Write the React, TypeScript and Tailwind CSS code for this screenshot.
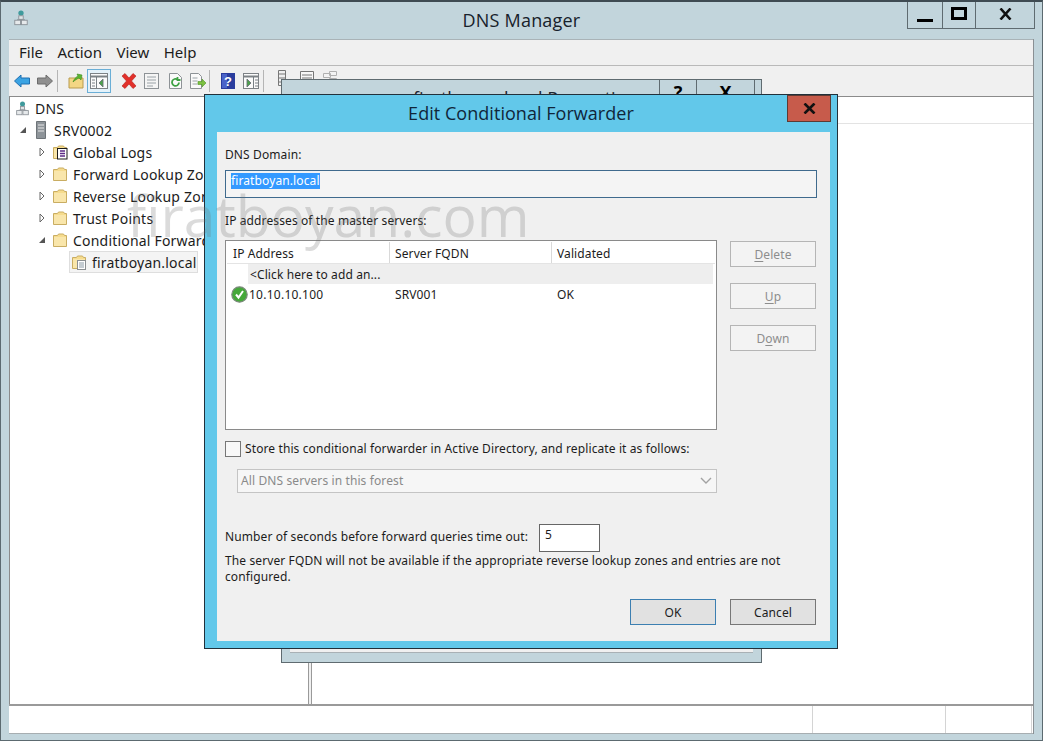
const ui = { fontFamily: '"Noto Sans", sans-serif' };

function DnsIcon({ size = 16 }: { size?: number }) {
  return (
    <svg width={size} height={size} viewBox="0 0 16 18" className="shrink-0">
      <circle cx="8" cy="3.5" r="3" fill="#3f9a9c" />
      <path d="M8 7v4M3.5 11h9" stroke="#8a9096" strokeWidth="1" fill="none" />
      <rect x="5.5" y="6.5" width="5" height="4" fill="#dfe3e6" stroke="#8a9096" strokeWidth="1" />
      <rect x="1" y="11.5" width="6.5" height="5" fill="#e6e9eb" stroke="#8a9096" strokeWidth="1" />
      <rect x="8.5" y="11.5" width="6.5" height="5" fill="#e6e9eb" stroke="#8a9096" strokeWidth="1" />
    </svg>
  );
}

function Folder({ doc = false, log = false }: { doc?: boolean; log?: boolean }) {
  return (
    <svg width="16" height="16" viewBox="0 0 16 16" className="shrink-0">
      <path d="M1.5 3.5h4l1-1.5h5l1 1.5h2v11h-13z" fill="#f6dc8e" stroke="#c9ad62" strokeWidth="1" />
      <rect x="2" y="5" width="12" height="9" fill="#f9e6ab" />
      {doc && (
        <>
          <rect x="6.5" y="6.5" width="8" height="9" fill="#fff" stroke="#8b8f92" />
          <path d="M8 9h5M8 11h5M8 13h5" stroke="#8b9aa5" />
        </>
      )}
      {log && (
        <>
          <rect x="5.5" y="4.5" width="9.5" height="10.5" fill="#fff" stroke="#1b1b1b" />
          <path d="M8 7h5M8 9.5h5M8 12h5" stroke="#5b2a86" strokeWidth="1.3" />
        </>
      )}
    </svg>
  );
}

function Caret({ open = false }: { open?: boolean }) {
  return (
    <svg width="8" height="10" viewBox="0 0 8 10" className="shrink-0">
      {open ? (
        <path d="M1 8h6V2z" fill="#555" />
      ) : (
        <path d="M2 1l4 4-4 4z" fill="#fff" stroke="#666" />
      )}
    </svg>
  );
}

function Row({ indent, caret, icon, label, selected }: { indent: string; caret?: "open" | "closed"; icon: React.ReactNode; label: string; selected?: boolean }) {
  return (
    <div className={`h-[22px] flex items-center ${indent}`}>
      {selected ? (
        <div className="flex items-center h-[22px] w-[129px] bg-[#f4f4f4] border border-[#dedede] pl-[1px] gap-[5px]">
          {icon}
          <span>{label}</span>
        </div>
      ) : (
        <>
          <div className="w-[14px] flex justify-start">{caret && <Caret open={caret === "open"} />}</div>
          <div className="flex items-center gap-[5px] whitespace-nowrap">
            {icon}
            <span>{label}</span>
          </div>
        </>
      )}
    </div>
  );
}

function Toolbar() {
  return (
    <div className="h-[30px] bg-[#f0f0f0] flex items-center pl-[5px] pb-[1px]">
      <svg width="16" height="14" viewBox="0 0 16 14"><path d="M0.5 7L7 1v3h8.500v6H7v3z" fill="#3aa3e3" stroke="#1f6fb0" /></svg>
      <svg width="16" height="14" viewBox="0 0 16 14" className="ml-[7px]"><path d="M15.500 7L9 1v3H0.500v6H9v3z" fill="#8f8f8f" stroke="#6c6c6c" /></svg>
      <div className="w-px h-[22px] bg-[#b5b5b5] ml-[4px]" />
      <svg width="16" height="16" viewBox="0 0 16 16" className="ml-[10px]"><path d="M1 5h14v10H1z" fill="#f3d684" stroke="#b99b4e" /><path d="M5 9c1-3 3-5 5-6l-1-2 5 1-1 5-2-2c-2 1-4 2-6 4z" fill="#5bb531" stroke="#3d8a1d" strokeWidth=".6" /></svg>
      <div className="ml-[3px] w-[24px] h-[24px] bg-[#e4f2fa] border border-[#6aaed6] flex items-center justify-center">
        <svg width="18" height="16" viewBox="0 0 18 16"><rect x=".5" y=".5" width="17" height="15" fill="#fbfbfb" stroke="#7d8286" /><path d="M1 3.500h16" stroke="#7d8286" strokeWidth="2" /><path d="M6.500 4v11M2 7h3M2 10h3M2 13h3M13 6v8l-4-4z" stroke="#6b7378" fill="#4ba34a" strokeWidth=".9" /></svg>
      </div>
      <svg width="18" height="16" viewBox="0 0 18 16" className="ml-[9px]"><path d="M2 3l3-2.500L9 5l4-4.500 3 2.500-4.500 5L16 13l-3 2.500L9 11l-4 4.500L2 13l4.500-5z" fill="#e2302a" stroke="#b3201b" strokeWidth=".6" /></svg>
      <svg width="15" height="16" viewBox="0 0 15 16" className="ml-[6px]"><rect x=".5" y=".5" width="14" height="15" fill="#f5f5f5" stroke="#8d9296" /><path d="M3 4h9M3 7h9M3 10h9M3 13h6" stroke="#9aa2a7" /></svg>
      <svg width="15" height="16" viewBox="0 0 15 16" className="ml-[9px]"><path d="M1.500.5h8l4 4v11h-12z" fill="#fafafa" stroke="#8d9296" /><path d="M11 9.500a3.500 3.500 0 1 1-1.500-3M9.500 4v3h3" stroke="#3da143" strokeWidth="1.800" fill="none" /></svg>
      <svg width="17" height="16" viewBox="0 0 17 16" className="ml-[6px]"><path d="M1.500.5h8l3 3v12h-11z" fill="#fafafa" stroke="#8d9296" /><path d="M3.500 5h5M3.500 8h5M3.500 11h5" stroke="#9aa2a7" /><path d="M9 8.500h4V6l4 4-4 4v-2.500H9z" fill="#7dc142" stroke="#4f9325" strokeWidth=".6" /></svg>
      <div className="w-px h-[22px] bg-[#b5b5b5] ml-[3px]" />
      <svg width="14" height="16" viewBox="0 0 14 16" className="ml-[11px]"><rect width="14" height="16" fill="#2a3d9e" /><rect x="1" y="1" width="5" height="14" fill="#4a63c9" /><text x="7" y="13" textAnchor="middle" fontSize="13" fontWeight="700" fontFamily="Liberation Sans" fill="#fff">?</text></svg>
      <svg width="16" height="16" viewBox="0 0 16 16" className="ml-[8px]"><rect x=".5" y=".5" width="15" height="15" fill="#fbfbfb" stroke="#7d8286" /><path d="M1 3.500h14" stroke="#7d8286" strokeWidth="2" /><path d="M10.500 4v11M12 7h3M12 10h3M12 13h3M4 6v8l4-4z" stroke="#6b7378" fill="#4ba34a" strokeWidth=".9" /></svg>
      <div className="w-px h-[22px] bg-[#b5b5b5] ml-[4px]" />
      <svg width="8" height="16" viewBox="0 0 8 16" className="ml-[14px] self-start mt-[4px]"><path d="M.5.500h7v15h-7zM1 4h6M1 8h6M1 12h6" fill="#f0f0f0" stroke="#777" /></svg>
      <svg width="14" height="16" viewBox="0 0 14 16" className="ml-[14px] self-start mt-[4px]"><path d="M.5 1.500h13v13H.5zM2 5h10M2 8h10M2 11h10" fill="#f7f7f7" stroke="#777" /></svg>
      <svg width="14" height="16" viewBox="0 0 14 16" className="ml-[9px] self-start mt-[4px]"><path d="M.5 3.500h7v4h-7zM6.500 1.500h7v4h-7zM6.500 8.500h7v4h-7z" fill="#f3f3f3" stroke="#b0b0b0" /></svg>
    </div>
  );
}

function SideButton({ children, mt }: { children: React.ReactNode; mt: string }) {
  return (
    <div className={`w-[86px] h-[26px] border border-[#b5b5b5] bg-[#f3f3f3] flex items-center justify-center pt-[1px] text-[#8d8d8d] ${mt}`}>
      <span>{children}</span>
    </div>
  );
}

function BackDialog() {
  return (
    <div className="absolute left-[280px] top-[77px] w-[481px] h-[584px] bg-[#c2d5dc] border border-[#5f6b70]">
      <div className="flex h-[26px]">
        <div className="flex-1 pl-[131px] text-[18px] text-[#1b2530] pt-[5px] whitespace-nowrap" style={{ fontFamily: '"Open Sans", sans-serif' }}>firatboyan.local Properties</div>
        <div className="w-[37px] h-[26px] border-l border-b border-[#5f6b70] flex items-center justify-center text-[18px] font-bold text-black">?</div>
        <div className="w-[59px] h-[26px] border-l border-r border-b border-[#5f6b70] flex items-center justify-center text-[18px] font-bold text-black">X</div>
        <div className="w-[6px]" />
      </div>
      <div className="mx-[8px] h-[547px] bg-[#f0f0f0] border-b border-[#a9b1b5]" />
    </div>
  );
}

function FrontDialog() {
  return (
    <div className="absolute left-[203px] top-[92px] w-[634px] h-[555px] bg-[#62c8ea] border border-[#22303a] text-[12px] tracking-[0.11px] text-[#1c1c1c] flex flex-col">
      <div className="h-[37px] flex relative shrink-0">
        <div className="flex-1 text-center text-[18px] tracking-[0.04px] text-[#10263a] pt-[4px] leading-[28px]" style={{ fontFamily: '"Open Sans", sans-serif' }}>Edit Conditional Forwarder</div>
        <div className="absolute right-[6px] top-0 w-[44px] h-[27px] bg-[#c75b4b] border border-[#5d3a33] flex items-center justify-center">
          <svg width="13" height="11" viewBox="0 0 13 11"><path d="M1.500 .5L11.500 10.500M11.500 .5L1.500 10.500" stroke="#111" strokeWidth="2.600" /></svg>
        </div>
      </div>
      <div className="mx-[12px] mt-0 mb-[7px] w-[613px] flex-1 bg-[#f0f0f0] pl-[8px] pr-[13px] pt-[15px] leading-[16px]">
        <div className="h-[16px]">DNS Domain:</div>
        <div className="mt-[7px] h-[28px] w-[592px] border border-[#3f6a8d] bg-[#f4f4f4] flex items-start pt-[2px] pl-[5px]">
          <span className="bg-[#3399ff] text-white h-[16px] leading-[16px]">firatboyan.local</span>
        </div>
        <div className="mt-[15px] h-[16px]">IP addresses of the master servers:</div>
        <div className="flex mt-[11px] h-[191px]">
          <div className="w-[492px] h-[190px] border border-[#8a8a8a] bg-white p-[1px]">
            <div className="flex h-[22px] border-b border-[#e4e4e4] items-center">
              <div className="w-[163px] h-full flex items-center pl-[6px] pt-[2px] border-r border-[#d9d9d9]">IP Address</div>
              <div className="w-[162px] h-full flex items-center pl-[5px] pt-[2px] border-r border-[#d9d9d9]">Server FQDN</div>
              <div className="flex-1 h-full flex items-center pl-[5px] pt-[2px]">Validated</div>
              <div className="w-[2px]" />
            </div>
            <div className="h-[20px] ml-[21px] mr-[2px] bg-[#eeeeee] flex items-center pl-[2px] pt-[1px]">&lt;Click here to add an...</div>
            <div className="h-[21px] flex items-center">
              <div className="w-[22px] pl-[4px] flex">
                <svg width="17" height="17" viewBox="0 0 17 17"><circle cx="8.500" cy="8.500" r="7.700" fill="#45a83a" stroke="#7d8a7d" strokeWidth="1.200" /><path d="M5 8.500l2.500 3L12 5" stroke="#fff" strokeWidth="2" fill="none" /></svg>
              </div>
              <div className="w-[146px] tracking-[0.25px]">10.10.10.100</div>
              <div className="w-[162px]">SRV001</div>
              <div>OK</div>
            </div>
          </div>
          <div className="ml-[13px] flex flex-col">
            <SideButton mt="mt-[1px]"><span className="underline underline-offset-2">D</span>elete</SideButton>
            <SideButton mt="mt-[16px]"><span className="underline underline-offset-2">U</span>p</SideButton>
            <SideButton mt="mt-[16px]">D<span className="underline underline-offset-2">o</span>wn</SideButton>
          </div>
        </div>
        <div className="flex items-center mt-[9px] h-[18px]">
          <div className="w-[16px] h-[16px] bg-[#f8f8f8] border border-[#777]" />
          <span className="ml-[4px]">Store this conditional forwarder in Active Directory, and replicate it as follows:</span>
        </div>
        <div className="ml-[12px] mt-[11px] w-[480px] h-[24px] bg-[#f6f6f6] border border-[#c4c4c4] flex items-center justify-between pl-[3px] pr-[4px] text-[#8a8a8a]">
          <span>All DNS servers in this forest</span>
          <svg width="12" height="8" viewBox="0 0 12 8"><path d="M1 1l5 5 5-5" stroke="#a2a2a2" strokeWidth="1.400" fill="none" /></svg>
        </div>
        <div className="flex items-center mt-[30px] h-[29px]">
          <span className="w-[314px] pb-[2px]">Number of seconds before forward queries time out:</span>
          <div className="w-[61px] h-[28px] bg-white border border-[#666] pl-[5px] pt-[2px]">5</div>
        </div>
        <div className="mt-[1px] w-[580px] leading-[16px]">The server FQDN will not be available if the appropriate reverse lookup zones and entries are not configured.</div>
        <div className="flex justify-end gap-[14px] mt-[14px] mr-[1px]">
          <div className="w-[86px] h-[26px] bg-[#e1e1e1] border border-[#3c7fb1] flex items-center justify-center pt-[1px]">OK</div>
          <div className="w-[86px] h-[26px] bg-[#e1e1e1] border border-[#777] flex items-center justify-center pt-[1px]">Cancel</div>
        </div>
      </div>
    </div>
  );
}

export default function App() {
  return (
    <div className="relative w-[1043px] h-[741px] overflow-hidden bg-[#c2d5dc] border border-[#5c6a70] border-t-2 border-t-[#3f4b52] flex flex-col" style={ui}>
      <div className="h-[37px] shrink-0 flex items-start relative">
        <div className="ml-[12px] mt-[8px] text-[#909aa0]"><DnsIcon size={16} /></div>
        <div className="absolute inset-x-0 top-[6px] text-center text-[18px] tracking-[0.2px] leading-[24px] text-[#17212b]" style={{ fontFamily: '"Open Sans", sans-serif' }}>DNS Manager</div>
        <div className="absolute left-[906px] top-0 flex h-[27px] border-l border-r border-b border-[#5f6b70]">
          <div className="w-[35px] border-r border-[#5f6b70] flex items-end justify-center pb-[6px]"><div className="w-[16px] h-[3px] bg-black" /></div>
          <div className="w-[33px] border-r border-[#5f6b70] flex items-center justify-center pb-[3px]"><div className="w-[16px] h-[13px] border-[3px] border-black" /></div>
          <div className="w-[58px] flex items-center justify-center pb-[3px]"><svg width="13" height="12" viewBox="0 0 13 12"><path d="M1.500 .5L11.500 11.500M11.500 .5L1.500 11.500" stroke="#111" strokeWidth="2.600" /></svg></div>
        </div>
      </div>
      <div className="mx-[8px] w-[1025px] flex-1 flex flex-col min-h-0 border-r border-[#8a9094]">
        <div className="h-[27px] shrink-0 bg-[#f0f0f0] border-b border-[#b9b9b9] border-t border-t-[#a9b3b7] flex items-center gap-[14.5px] pl-[10px] text-[15px] text-[#1c1c1c]">
          <span>File</span><span>Action</span><span>View</span><span>Help</span>
        </div>
        <Toolbar />
        <div className="flex-1 min-h-0 flex border-t border-[#8b8b8b] border-l border-l-[#8b8b8b]">
          <div className="w-[298px] bg-white text-[14px] tracking-[0.2px] text-[#1c1c1c] overflow-hidden">
            <div className="h-[22px] flex items-center pl-[5px] gap-[5px]"><DnsIcon size={15} /><span>DNS</span></div>
            <Row indent="pl-[9px]" caret="open" icon={<svg width="14" height="18" viewBox="0 0 14 18" className="shrink-0 ml-[1px] mr-[1px]"><path d="M2.500 .5h9v17h-9z" fill="#8e9499" stroke="#6e7478" /><path d="M4 4h6M4 7h6M4 10h6" stroke="#e8e8e8" /></svg>} label="SRV0002" />
            <Row indent="pl-[28px]" caret="closed" icon={<Folder log />} label="Global Logs" />
            <Row indent="pl-[28px]" caret="closed" icon={<Folder />} label="Forward Lookup Zones" />
            <Row indent="pl-[28px]" caret="closed" icon={<Folder />} label="Reverse Lookup Zones" />
            <Row indent="pl-[28px]" caret="closed" icon={<Folder />} label="Trust Points" />
            <Row indent="pl-[28px]" caret="open" icon={<Folder />} label="Conditional Forwarders" />
            <Row indent="pl-[59px]" icon={<Folder doc />} label="firatboyan.local" selected />
          </div>
          <div className="w-[4px] bg-[#f0f0f0] border-l border-r border-[#9a9a9a]" />
          <div className="flex-1 bg-white">
            <div className="h-[27px] border-b border-[#e3e3e3]" />
          </div>
        </div>
        <div className="h-[30px] shrink-0 bg-white border-t-2 border-[#9a9a9a] border-b border-b-[#a7aeb1] flex justify-end">
          <div className="w-[133px] border-l border-[#d4d4d4]" />
          <div className="w-[87px] border-l border-r border-[#d4d4d4] mr-[1px]" />
        </div>
      </div>
      <div className="h-[6px] shrink-0" />
      <BackDialog />
      <FrontDialog />
      <div className="absolute left-[126px] top-[177px] text-[57px] font-medium leading-[72px] text-[#6f6f6f]/25 whitespace-nowrap pointer-events-none" style={{ fontFamily: '"Open Sans", sans-serif' }}>firatboyan.com</div>
    </div>
  );
}
